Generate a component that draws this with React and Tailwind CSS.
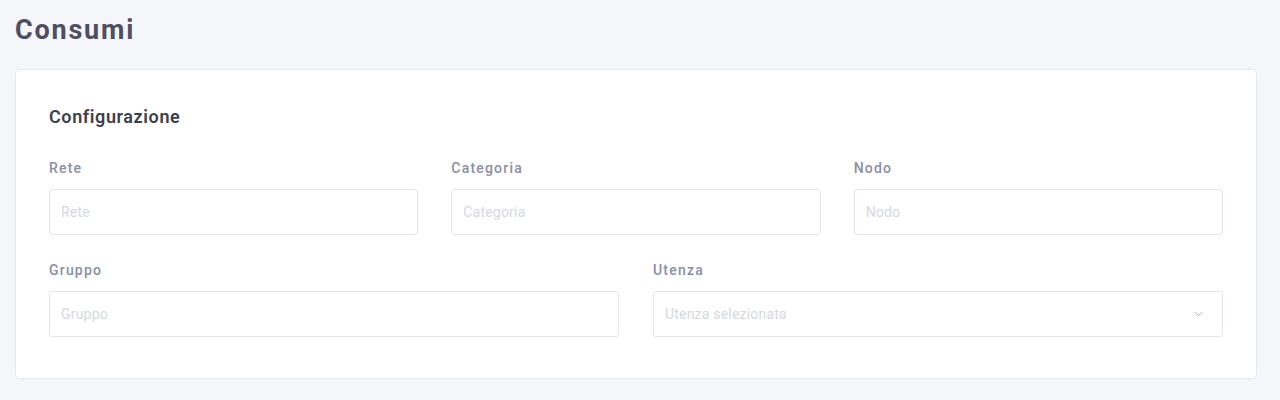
import { ChevronDown } from "lucide-react";

function Field({ label, placeholder, select }) {
  return (
    <div className="flex flex-col">
      <label className="text-[14px] leading-5 font-medium tracking-[1.2px] text-[#8a8ea6] mb-[11px]">
        {label}
      </label>
      <div className="relative">
        <input
          type="text"
          placeholder={placeholder}
          readOnly={select}
          className="w-full h-[46px] px-[11px] rounded-[3px] border border-[#e3e6ef] bg-white text-[14px] tracking-[0.2px] text-[#4b4d63] placeholder:text-[#d6d8e0] outline-none"
        />
        {select && (
          <ChevronDown
            className="absolute right-[18px] top-1/2 -translate-y-1/2 w-[13px] h-[13px] text-[#9a9db0]"
            strokeWidth={1.5}
          />
        )}
      </div>
    </div>
  );
}

export default function App() {
  return (
    <div
      className="min-h-[400px] bg-[#f5f6fa] px-[15px] pt-[12px] pb-4"
      style={{ fontFamily: "Roboto, 'Liberation Sans', sans-serif" }}
    >
      <h1 className="text-[27px] leading-9 font-bold tracking-[1.8px] text-[#4d4f64] mb-[21px]">
        Consumi
      </h1>
      <div className="bg-white border border-[#e6e8f0] rounded-[5px] pt-[35px] pb-[41px] px-[33px] mr-[8px]">
        <h2 className="text-[18px] leading-6 font-semibold tracking-[0.6px] text-[#3d3f4e] mb-[29px]">
          Configurazione
        </h2>
        <div className="grid grid-cols-3 gap-x-[33px] mb-[25px]">
          <Field label="Rete" placeholder="Rete" />
          <Field label="Categoria" placeholder="Categoria" />
          <Field label="Nodo" placeholder="Nodo" />
        </div>
        <div className="grid grid-cols-2 gap-x-[34px]">
          <Field label="Gruppo" placeholder="Gruppo" />
          <Field label="Utenza" placeholder="Utenza selezionata" select />
        </div>
      </div>
    </div>
  );
}
